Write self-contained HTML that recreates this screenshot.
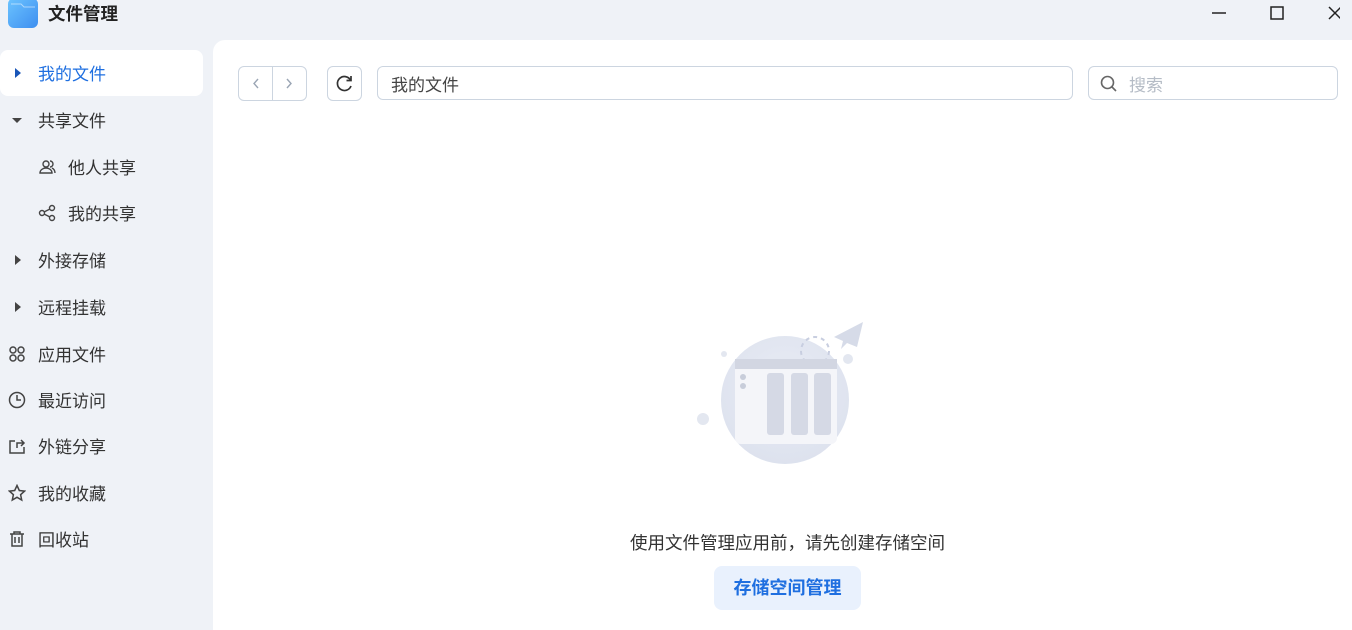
<!DOCTYPE html>
<html><head><meta charset="utf-8"><style>
*{margin:0;padding:0;box-sizing:border-box}
body{width:1352px;height:630px;overflow:hidden;background:#eff2f7;font-family:"Liberation Sans","Noto Sans CJK SC",sans-serif;position:relative;color:#333}
.abs{position:absolute}
.title{left:48px;top:1px;font-size:17.5px;font-weight:bold;color:#222}
.nav{left:0;width:203px;height:46px;font-size:17px;color:#333;display:flex;align-items:center}
.nav .ic{position:absolute;left:8px;top:14px;width:18px;height:18px}
.nav span{position:absolute;left:38px;top:10px}
.sub span{left:68px}.sub .ic{left:38px}
.main{left:213px;top:40px;width:1139px;height:590px;background:#fff;border-top-left-radius:12px}
.box{border:1px solid #ccd5e0;border-radius:6px;background:#fff}
</style></head><body>
<svg class="abs" style="left:8px;top:0" width="30" height="28" viewBox="0 0 30 28"><defs><linearGradient id="g" x1="0" y1="0" x2="1" y2="1"><stop offset="0" stop-color="#6cc4ff"/><stop offset="1" stop-color="#3d8ef0"/></linearGradient></defs><rect x="0" y="-2" width="30" height="30" rx="6" fill="url(#g)"/><path d="M3 4h10l3 3h11" stroke="#fff" stroke-opacity=".5" fill="none"/></svg>
<div class="abs title">文件管理</div>
<svg class="abs" style="left:1210px;top:5px" width="130" height="16" viewBox="0 0 130 16"><path d="M2 8h14" stroke="#222" stroke-width="1.5"/><rect x="61" y="2" width="12" height="12" fill="none" stroke="#222" stroke-width="1.5"/><path d="M119 2l12 12M131 2l-12 12" stroke="#222" stroke-width="1.5"/></svg>

<div class="abs nav" style="top:50px;background:#fff;border-radius:8px;color:#1f6fe0"><svg class="ic" viewBox="0 0 18 18"><path d="M7 4l6 5-6 5z" fill="#1a56b8"/></svg><span>我的文件</span></div>
<div class="abs nav" style="top:97px"><svg class="ic" viewBox="0 0 18 18"><path d="M4 7h10l-5 5z" fill="#444"/></svg><span>共享文件</span></div>
<div class="abs nav sub" style="top:144px"><svg class="ic" viewBox="0 0 18 18" fill="none" stroke="#444" stroke-width="1.4"><circle cx="8" cy="6" r="3"/><path d="M2 15c0-3 3-5 6-5s6 2 6 5zM12 3a3 3 0 010 6M14 10c2 1 3 3 3 5"/></svg><span>他人共享</span></div>
<div class="abs nav sub" style="top:190px"><svg class="ic" viewBox="0 0 18 18" fill="none" stroke="#444" stroke-width="1.4"><circle cx="4" cy="9" r="2.5"/><circle cx="14" cy="4" r="2.5"/><circle cx="14" cy="14" r="2.5"/><path d="M6 8l6-3M6 10l6 3"/></svg><span>我的共享</span></div>
<div class="abs nav" style="top:237px"><svg class="ic" viewBox="0 0 18 18"><path d="M7 4l6 5-6 5z" fill="#444"/></svg><span>外接存储</span></div>
<div class="abs nav" style="top:284px"><svg class="ic" viewBox="0 0 18 18"><path d="M7 4l6 5-6 5z" fill="#444"/></svg><span>远程挂载</span></div>
<div class="abs nav" style="top:331px"><svg class="ic" viewBox="0 0 18 18" fill="none" stroke="#444" stroke-width="1.5"><circle cx="5" cy="5" r="3"/><circle cx="13" cy="5" r="3"/><circle cx="5" cy="13" r="3"/><circle cx="13" cy="13" r="3"/></svg><span>应用文件</span></div>
<div class="abs nav" style="top:377px"><svg class="ic" viewBox="0 0 18 18" fill="none" stroke="#444" stroke-width="1.5"><circle cx="9" cy="9" r="7.5"/><path d="M9 4v5h4"/></svg><span>最近访问</span></div>
<div class="abs nav" style="top:423px"><svg class="ic" viewBox="0 0 18 18" fill="none" stroke="#444" stroke-width="1.5"><path d="M7 4H2v12h14v-6M9 11V6h7M13 3l3 3-3 3"/></svg><span>外链分享</span></div>
<div class="abs nav" style="top:470px"><svg class="ic" viewBox="0 0 18 18" fill="none" stroke="#444" stroke-width="1.5"><path d="M9 1.5l2.3 5 5.3.6-4 3.6 1.1 5.3L9 13.3 4.3 16l1.1-5.3-4-3.6 5.3-.6z"/></svg><span>我的收藏</span></div>
<div class="abs nav" style="top:516px"><svg class="ic" viewBox="0 0 18 18" fill="none" stroke="#444" stroke-width="1.5"><path d="M2 4h14M6 4V2h6v2M4 4v12h10V4M7 7v6M11 7v6"/></svg><span>回收站</span></div>

<div class="abs main"></div>
<div class="abs box" style="left:238px;top:66px;width:69px;height:35px"></div>
<div class="abs" style="left:272px;top:67px;width:1px;height:33px;background:#ccd5e0"></div>
<svg class="abs" style="left:238px;top:66px" width="69" height="35" viewBox="0 0 69 35" fill="none" stroke="#9aa5b4" stroke-width="1.4"><path d="M20 13l-4 4.5 4 4.5M49 13l4 4.5-4 4.5"/></svg>
<div class="abs box" style="left:327px;top:66px;width:35px;height:35px"></div>
<svg class="abs" style="left:334px;top:73px" width="21" height="21" viewBox="0 0 21 21" fill="none" stroke="#333" stroke-width="1.7"><path d="M16.5 7A7 7 0 1 0 17 13"/><path d="M17 3v4.5h-4.5"/></svg>
<div class="abs box" style="left:377px;top:66px;width:696px;height:34px;padding:4px 13px;font-size:17px;color:#444">我的文件</div>
<div class="abs box" style="left:1088px;top:66px;width:250px;height:34px;padding:4px 0 0 40px;font-size:17px;color:#b5bcc6">搜索</div>
<svg class="abs" style="left:1099px;top:74px" width="20" height="20" viewBox="0 0 20 20" fill="none" stroke="#666" stroke-width="1.6"><circle cx="8.5" cy="8.5" r="6"/><path d="M13 13l4 4"/></svg>

<svg class="abs" style="left:690px;top:315px" width="180" height="170" viewBox="0 0 180 170">
<defs><radialGradient id="r" cx=".5" cy=".4" r=".6"><stop offset="0" stop-color="#e9ecf5"/><stop offset="1" stop-color="#dde2ee"/></radialGradient></defs>
<circle cx="95" cy="85" r="64" fill="url(#r)"/>
<circle cx="34" cy="39" r="3" fill="#e3e7f0"/><circle cx="158" cy="44" r="5" fill="#e3e7f0"/><circle cx="13" cy="104" r="6" fill="#e3e7f0"/>
<path d="M173 7l-29 15 9 4-2 8 6-6 10 4z" fill="#d6dbe8"/>
<circle cx="125" cy="36" r="14" fill="none" stroke="#c8cee0" stroke-width="2" stroke-dasharray="4 4"/>
<rect x="45" y="44" width="102" height="85" rx="6" fill="#f4f5f9"/>
<rect x="45" y="44" width="102" height="10" fill="#d2d6e2"/>
<circle cx="53" cy="62" r="3" fill="#c8cdda"/><circle cx="53" cy="71" r="3" fill="#c8cdda"/>
<rect x="77" y="58" width="17" height="62" rx="3" fill="#d5d9e5"/><rect x="101" y="58" width="17" height="62" rx="3" fill="#d5d9e5"/><rect x="124" y="58" width="17" height="62" rx="3" fill="#d5d9e5"/>
</svg>
<div class="abs" style="left:630px;top:530px;font-size:17.5px;color:#333;white-space:nowrap">使用文件管理应用前，请先创建存储空间</div>
<div class="abs" style="left:714px;top:566px;width:147px;height:44px;background:#e9f1fd;border-radius:8px;color:#1f6fe0;font-weight:bold;font-size:18px;text-align:center;line-height:44px">存储空间管理</div>
</body></html>
